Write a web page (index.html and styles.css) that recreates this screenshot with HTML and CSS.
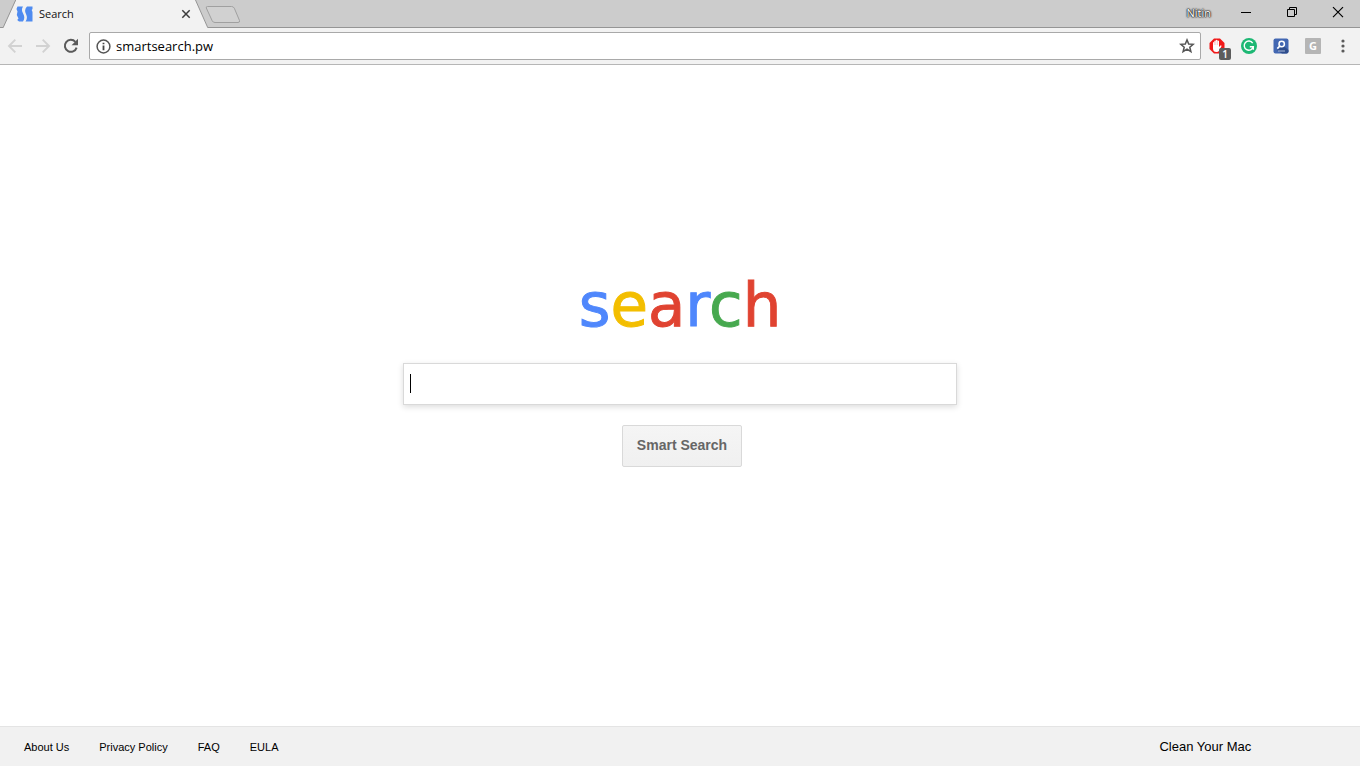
FILE: index.html
```html
<!DOCTYPE html>
<html lang="en">
<head>
    <meta charset="UTF-8">
    <meta name="viewport" content="width=device-width, initial-scale=1.0">
    <title>Search</title>
    <link rel="stylesheet" href="styles.css">
</head>
<body>
    <header class="browser">
        <div class="tab-strip">
            <svg class="tab-edge" width="16" height="28" viewBox="0 0 16 28">
                <path d="M3 28L16 0V28Z" fill="#f2f2f2"/>
                <path d="M0 27.5H3.2L15.7 0" fill="none" stroke="#959595"/>
            </svg>
            <div class="tab">
                <svg width="17" height="16" viewBox="0 0 17 16">
                    <path d="M1.5 0.5H7C5.5 3 5.7 5 7 7.3C8.7 10.4 8.8 13 7 15.5H3L1.2 14L2.5 12.5L0.8 9L1.5 5.5L0.5 3Z" fill="#4f8bf0"/>
                    <path d="M11 0.5H16.5V3L15.7 4L16.5 6V15.5H9.5C11.3 13 11.3 10.5 10 8C8.6 5.2 8.8 3 11 0.5Z" fill="#4f8bf0"/>
                </svg>
                <span class="tab-title">Search</span>
                <button class="tab-close" aria-label="Close tab">
                    <svg width="10" height="10" viewBox="0 0 10 10"><path d="M1.3 1.3L8.7 8.7M8.7 1.3L1.3 8.7" stroke="#3c3c3c" stroke-width="1.5"/></svg>
                </button>
            </div>
            <svg class="tab-edge" width="15" height="28" viewBox="0 0 15 28">
                <path d="M0 0H1.5L14 28H0Z" fill="#f2f2f2"/>
                <path d="M1.5 0L13.7 27.5H15" fill="none" stroke="#959595"/>
            </svg>
            <button class="new-tab" aria-label="New tab">
                <svg width="36" height="28" viewBox="0 0 36 28">
                    <path d="M2.5 6.5H26.5Q28.5 6.5 29.3 8.2L34.5 20.5Q35 22.5 33 22.5H10Q8 22.5 7.2 20.8L1.3 8Q0.8 6.5 2.5 6.5Z" fill="#d1d1d1" stroke="#a0a0a0"/>
                </svg>
            </button>
            <span class="profile">Nitin</span>
            <div class="window-buttons">
                <button aria-label="Minimize">
                    <svg width="46" height="27" viewBox="0 0 46 27"><path d="M19 12.5H29" stroke="#000"/></svg>
                </button>
                <button aria-label="Restore">
                    <svg width="46" height="27" viewBox="0 0 46 27"><path d="M19.5 9.5H26.5V16.5H19.5ZM21.5 9.5V7.5H28.5V14.5H26.5" fill="none" stroke="#000"/></svg>
                </button>
                <button aria-label="Close">
                    <svg width="46" height="27" viewBox="0 0 46 27"><path d="M19 7.2L29 17.2M29 7.2L19 17.2" stroke="#000" stroke-width="1.2"/></svg>
                </button>
            </div>
        </div>

        <div class="toolbar">
            <div class="nav">
                <button aria-label="Back">
                    <svg width="16" height="16" viewBox="0 0 16 16"><path d="M15 8H2.5M8.3 1.7L2 8L8.3 14.3" fill="none" stroke="#d2d2d2" stroke-width="1.9"/></svg>
                </button>
                <button aria-label="Forward">
                    <svg width="16" height="16" viewBox="0 0 16 16"><path d="M1 8H13.5M7.7 1.7L14 8L7.7 14.3" fill="none" stroke="#d2d2d2" stroke-width="1.9"/></svg>
                </button>
                <button aria-label="Reload">
                    <svg width="16" height="16" viewBox="0 0 16 16">
                        <path d="M13.6 9.6A6 6 0 1 1 12.4 3.9" fill="none" stroke="#5a5a5a" stroke-width="2"/>
                        <path d="M15 0.8V7.2H8.6Z" fill="#5a5a5a"/>
                    </svg>
                </button>
            </div>
            <div class="omnibox">
                <svg width="15" height="15" viewBox="0 0 15 15">
                    <circle cx="7.5" cy="7.5" r="6.4" fill="none" stroke="#555" stroke-width="1.5"/>
                    <path d="M7.5 6.5V11.2M7.5 3.7V5.3" stroke="#444" stroke-width="1.8"/>
                </svg>
                <input type="text" value="smartsearch.pw" aria-label="Address">
                <button aria-label="Bookmark">
                    <svg width="16" height="16" viewBox="0 0 16 16"><path d="M8 1.9L9.7 6L14.2 6.3L10.8 9.2L11.9 13.7L8 11.2L4.1 13.7L5.2 9.2L1.8 6.3L6.3 6Z" fill="none" stroke="#555" stroke-width="1.5"/></svg>
                </button>
            </div>
            <div class="extensions">
                <button class="blocker" aria-label="Ad blocker">
                    <svg width="16" height="16" viewBox="0 0 16 16">
                        <path d="M5 0.5H11L15.5 5V11L11 15.5H5L0.5 11V5Z" fill="#f01818"/>
                        <path d="M4 8V4.4Q4.6 3.5 5.3 4.4V7V2.9Q6.1 2 6.8 2.9V6.8V2.2Q7.7 1.4 8.5 2.2V6.8V3Q9.3 2.2 10 3V9L11.5 7.4Q12.6 7.2 12.5 8.2L10.3 12.4Q9.3 14 7.5 14Q4 14 4 10.5Z" fill="#fff"/>
                        <path d="M5.3 3.5V7M6.8 2.5V7M8.5 2.5V7" stroke="#f8a0a0" stroke-width="0.5"/>
                    </svg>
                    <span class="count">1</span>
                </button>
                <button aria-label="Writing checker">
                    <svg width="16" height="16" viewBox="0 0 16 16">
                        <circle cx="8" cy="8" r="8" fill="#1db874"/>
                        <path d="M11.7 5.1A4.6 4.6 0 1 0 12.3 8.7H8.8M12.3 8.2V11.7" fill="none" stroke="#fff" stroke-width="1.4"/>
                    </svg>
                </button>
                <button aria-label="Search helper">
                    <svg width="16" height="16" viewBox="0 0 16 16">
                        <rect x="0.5" y="0.5" width="15" height="15" rx="2" fill="#4267b2"/>
                        <path d="M10.5 8L15.5 12V13.5Q15.5 15.5 13.5 15.5H9L4 12Z" fill="#2f4d8c"/>
                        <circle cx="8.7" cy="6" r="2.7" fill="none" stroke="#fff" stroke-width="1.5"/>
                        <path d="M6.8 8L4.3 10.7" stroke="#fff" stroke-width="1.7"/>
                        <path d="M5 13H12" stroke="#a9bad9"/>
                    </svg>
                </button>
                <button aria-label="G extension"><span class="letter">G</span></button>
            </div>
            <button class="menu" aria-label="Menu">
                <svg width="4" height="14" viewBox="0 0 4 14"><g fill="#5a5a5a"><circle cx="2" cy="2" r="1.6"/><circle cx="2" cy="7" r="1.6"/><circle cx="2" cy="12" r="1.6"/></g></svg>
            </button>
        </div>
    </header>

    <main class="content">
        <h1 class="logo"><span class="blue">s</span><span class="yellow">e</span><span class="red">a</span><span class="blue">r</span><span class="green">c</span><span class="red">h</span></h1>
        <form class="search-form">
            <div class="search-box">
                <input type="text" class="search-input" aria-label="Search">
                <span class="caret"></span>
            </div>
            <button type="button" class="search-button">Smart Search</button>
        </form>
    </main>

    <footer class="footer">
        <nav class="footer-links">
            <a href="#">About Us</a>
            <a href="#">Privacy Policy</a>
            <a href="#">FAQ</a>
            <a href="#">EULA</a>
        </nav>
        <a class="clean" href="#">Clean Your Mac</a>
    </footer>
</body>
</html>
```

FILE: styles.css
```css
* {
    box-sizing: border-box;
}

body {
    margin: 0;
    min-height: 100vh;
    display: flex;
    flex-direction: column;
    background: #fff;
    font-family: "Liberation Sans", Arial, sans-serif;
}

button {
    padding: 0;
    border: 0;
    background: none;
    font-family: inherit;
}

svg {
    display: block;
}

a {
    color: #000;
    text-decoration: none;
}

/* browser window */
.browser {
    font-family: "Open Sans", "Noto Sans", sans-serif;
}

.tab-strip {
    display: flex;
    height: 28px;
    background: linear-gradient(#ccc 27px, #959595 27px);
}

.tab {
    display: flex;
    align-items: center;
    width: 178px;
    background: #f2f2f2;
}

.tab-title {
    flex: 1;
    margin-left: 6px;
    padding-bottom: 2px;
    font-size: 11px;
    color: #111;
}

.tab-close {
    margin-right: 3px;
}

.new-tab {
    margin-right: auto;
    margin-left: -4px;
}

.profile {
    margin-right: 11px;
    font-size: 11px;
    line-height: 26px;
    color: #fff;
    text-shadow: 0 0 1px #222, 0 0 1px #222, 0 0 2px #222, 0 0 2px #222;
}

.window-buttons {
    display: flex;
}

.window-buttons button {
    height: 26px;
}

.toolbar {
    display: flex;
    align-items: center;
    height: 37px;
    padding: 0 15px 0 7px;
    background: #f2f2f2;
    border-bottom: 1px solid #b6b6b6;
}

.nav {
    display: flex;
    gap: 12px;
}

.omnibox {
    flex: 1;
    display: flex;
    align-items: center;
    height: 28px;
    margin-left: 10px;
    padding: 0 5px 0 6px;
    background: #fff;
    border: 1px solid #a9a9a9;
    border-radius: 2px;
}

.omnibox input {
    flex: 1;
    padding: 0 5px;
    border: 0;
    outline: 0;
    background: none;
    font-family: inherit;
    font-size: 13px;
    color: #000;
}

.extensions {
    display: flex;
    gap: 16px;
    margin: 0 20px 0 8px;
}

.blocker {
    position: relative;
}

.count {
    position: absolute;
    left: 10px;
    top: 10px;
    width: 12px;
    height: 12px;
    border-radius: 2px;
    background: #5c5c5c;
    color: #fff;
    font-size: 10px;
    font-weight: 600;
    line-height: 12px;
}

.letter {
    display: block;
    width: 16px;
    height: 16px;
    border-radius: 1px;
    background: #b5b5b5;
    color: #fff;
    font-size: 11px;
    font-weight: bold;
    line-height: 16px;
}

/* search page */
.content {
    flex: 1;
    padding: 204px 0 40px;
}

.logo {
    margin: 0 0 22px;
    font-family: "DejaVu Sans", Verdana, sans-serif;
    font-size: 61px;
    font-weight: normal;
    line-height: 72px;
    text-align: center;
    -webkit-text-stroke: 1px;
}

.blue {
    color: #4f87fc;
}

.yellow {
    color: #f3be00;
}

.red {
    color: #e04331;
}

.green {
    color: #47a94f;
}

.search-form {
    display: flex;
    flex-direction: column;
    align-items: center;
    gap: 20px;
}

.search-box {
    position: relative;
    width: 554px;
    max-width: 90%;
}

.search-input {
    display: block;
    width: 100%;
    height: 42px;
    padding: 0 6px;
    border: 1px solid #d9d9d9;
    outline: 0;
    box-shadow: 0 2px 6px rgba(0, 0, 0, 0.14);
    font-size: 16px;
}

.caret {
    position: absolute;
    left: 7px;
    top: 11px;
    width: 1px;
    height: 19px;
    background: #000;
}

.search-button {
    width: 120px;
    height: 42px;
    margin-left: 4px;
    padding-bottom: 2px;
    border: 1px solid #d9d9d9;
    border-radius: 2px;
    background: linear-gradient(#f5f5f5, #f0f0f0);
    color: #666;
    font-size: 14px;
    font-weight: bold;
}

.footer {
    display: flex;
    align-items: center;
    justify-content: space-between;
    height: 40px;
    padding: 0 8% 0 24px;
    background: #f1f1f1;
    border-top: 1px solid #e4e4e4;
}

.footer-links {
    display: flex;
    gap: 30px;
    font-size: 11px;
}

.clean {
    font-size: 13px;
}
```
